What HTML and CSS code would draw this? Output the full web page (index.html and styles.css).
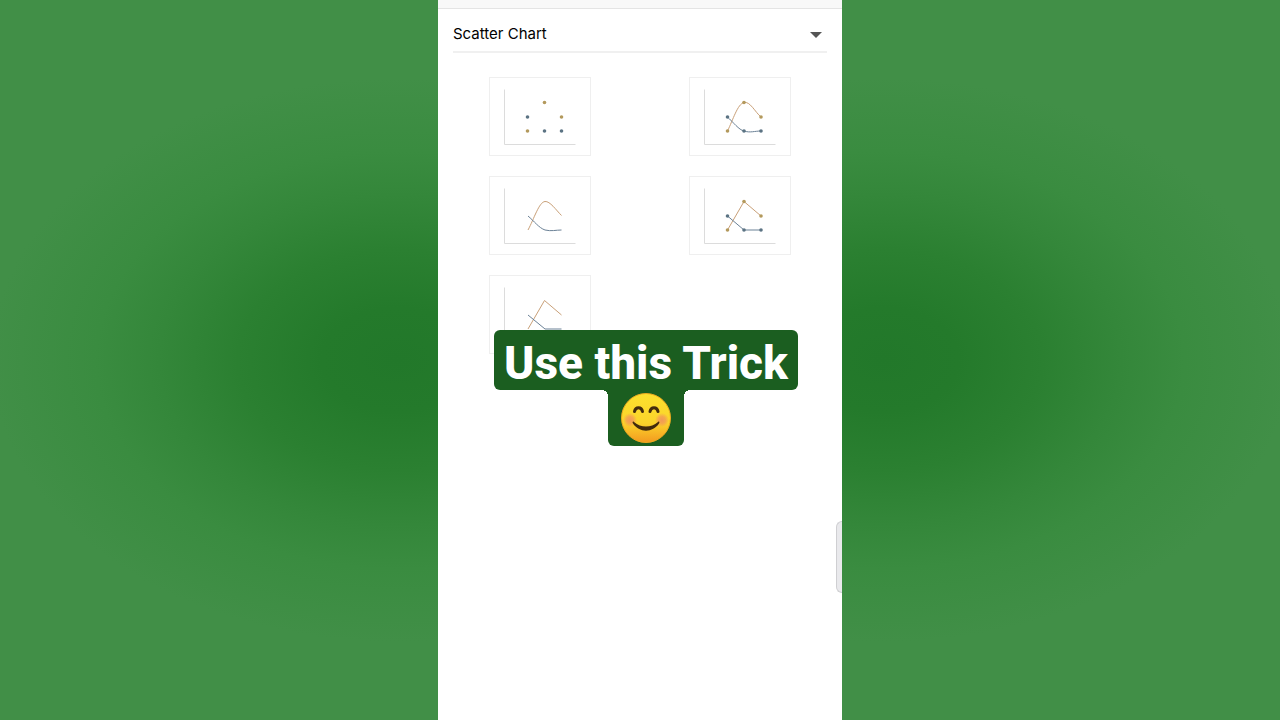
FILE: index.html
```html
<!DOCTYPE html>
<html lang="en">
<head>
    <meta charset="utf-8">
    <meta name="viewport" content="width=device-width, initial-scale=1">
    <title>Scatter Chart</title>
    <link rel="stylesheet" href="styles.css">
</head>
<body>

    <main class="phone">
        <div class="top-bar"></div>

        <div class="chart-select">
            <select id="chartType" aria-label="Chart type">
                <option>Scatter Chart</option>
            </select>
            <svg class="caret" viewBox="0 0 12 6" aria-hidden="true"><path d="M0 0h12L6 6z"/></svg>
        </div>

        <div class="chart-grid">
            <!-- markers only -->
            <button class="chart-tile" type="button" aria-label="Scatter">
                <svg viewBox="1 1 100 77">
                    <path class="axis" d="M15.5 12.5v55h71"/>
                    <g class="dot-a"><circle cx="38.5" cy="54" r="1.8"/><circle cx="55.5" cy="25.5" r="1.8"/><circle cx="72.5" cy="40" r="1.8"/></g>
                    <g class="dot-b"><circle cx="38.5" cy="40" r="1.8"/><circle cx="55.5" cy="54" r="1.8"/><circle cx="72.5" cy="54" r="1.8"/></g>
                </svg>
            </button>
            <!-- smooth lines and markers -->
            <button class="chart-tile" type="button" aria-label="Scatter with smooth lines and markers">
                <svg viewBox="1 1 100 77">
                    <path class="axis" d="M15.5 12.5v55h71"/>
                    <path class="line-a" d="M38.5 54C44 43 48.5 27 55 25.5C61 24 66 35 72 40"/>
                    <path class="line-b" d="M38.5 40C44 45 50 53 55 54C61 56 66 54 72 54"/>
                    <g class="dot-a"><circle cx="38.5" cy="54" r="1.8"/><circle cx="55" cy="25.5" r="1.8"/><circle cx="72" cy="40" r="1.8"/></g>
                    <g class="dot-b"><circle cx="38.5" cy="40" r="1.8"/><circle cx="55" cy="54" r="1.8"/><circle cx="72" cy="54" r="1.8"/></g>
                </svg>
            </button>
            <!-- smooth lines -->
            <button class="chart-tile" type="button" aria-label="Scatter with smooth lines">
                <svg viewBox="1 1 100 77">
                    <path class="axis" d="M15.5 12.5v55h71"/>
                    <path class="line-a" d="M39 54C45 43 50 26 56 25.5C61 25 67 34 72.5 39.5"/>
                    <path class="line-b" d="M39 40C45 45 50 52 56 54C62 55.5 67 54 72.5 54"/>
                </svg>
            </button>
            <!-- straight lines and markers -->
            <button class="chart-tile" type="button" aria-label="Scatter with straight lines and markers">
                <svg viewBox="1 1 100 77">
                    <path class="axis" d="M15.5 12.5v55h71"/>
                    <path class="line-a" d="M38.5 54L55 25.5L72 40"/>
                    <path class="line-b" d="M38.5 40L55 54H72"/>
                    <g class="dot-a"><circle cx="38.5" cy="54" r="1.8"/><circle cx="55" cy="25.5" r="1.8"/><circle cx="72" cy="40" r="1.8"/></g>
                    <g class="dot-b"><circle cx="38.5" cy="40" r="1.8"/><circle cx="55" cy="54" r="1.8"/><circle cx="72" cy="54" r="1.8"/></g>
                </svg>
            </button>
            <!-- straight lines -->
            <button class="chart-tile" type="button" aria-label="Scatter with straight lines">
                <svg viewBox="1 1 100 77">
                    <path class="axis" d="M15.5 12.5v55h71"/>
                    <path class="line-a" d="M39 54L55.5 25.5L72.5 40"/>
                    <path class="line-b" d="M39 40L56 54H72.5"/>
                </svg>
            </button>
        </div>

        <div class="caption">
            <div class="caption-text">Use this Trick</div>
            <div class="caption-emoji">
                <svg viewBox="0 0 52 52" role="img" aria-label="Smiling face">
                    <defs>
                        <linearGradient id="face" x1="0" y1="0" x2="0" y2="1">
                            <stop offset="0" stop-color="#fce02e"/>
                            <stop offset="0.6" stop-color="#fbd42b"/>
                            <stop offset="1" stop-color="#f39a20"/>
                        </linearGradient>
                        <radialGradient id="blush">
                            <stop offset="0" stop-color="#f08a62" stop-opacity="0.8"/>
                            <stop offset="0.5" stop-color="#f08a62" stop-opacity="0.6"/>
                            <stop offset="1" stop-color="#f08a62" stop-opacity="0"/>
                        </radialGradient>
                    </defs>
                    <circle cx="26" cy="26" r="24.5" fill="url(#face)" stroke="#eda81f"/>
                    <circle cx="10" cy="28" r="7" fill="url(#blush)"/>
                    <circle cx="42" cy="28" r="7" fill="url(#blush)"/>
                    <path class="eye" d="M14.5 19.5C15.5 14.5 21.5 14.5 22.5 19.5"/>
                    <path class="eye" d="M30 19.5C31 14.5 37 14.5 38 19.5"/>
                    <path class="mouth" d="M14 30C21 36 31 36 38 30C39 29 40 30 39 31.5C33 41 19 41 13 31.5C12 30 13 29 14 30Z"/>
                </svg>
            </div>
        </div>

        <div class="edge-handle"></div>
    </main>

</body>
</html>
```
FILE: styles.css
```css
* {
    box-sizing: border-box;
}
body {
    margin: 0;
    min-height: 100vh;
    /* one glow behind each side of the phone */
    background:
        radial-gradient(ellipse 47% 29% at 62% 50%, #22782a, #247a2b 25%, #2b8031 53%, #34873a 79%, #3a8c40 100%, #418f47 135%) left / 50% 100% no-repeat,
        radial-gradient(ellipse 47% 29% at 38% 50%, #22782a, #247a2b 25%, #2b8031 53%, #34873a 79%, #3a8c40 100%, #418f47 135%) right / 50% 100% no-repeat;
    font-family: Inter, "Liberation Sans", sans-serif;
}
.phone {
    position: relative;
    max-width: 404px;
    min-height: 100vh;
    margin: 0 auto;
    background: #fff;
    overflow: hidden;
}
.top-bar {
    height: 9px;
    background: #f8f8f8;
    border-bottom: 1px solid #e4e4e4;
}

/* chart type drop-down */
.chart-select {
    position: relative;
    margin: 6px 15px 0;
    border-bottom: 2px solid #f0f0f0;
}
.chart-select select {
    display: block;
    width: 100%;
    height: 36px;
    padding: 2px 0 0;
    border: 0;
    background: none;
    appearance: none;
    color: #000;
    font: 15px/20px Inter, "Liberation Sans", sans-serif;
}
.caret {
    position: absolute;
    top: 17px;
    right: 5px;
    width: 12px;
    height: 6px;
    fill: #555;
    pointer-events: none;
}

/* previews */
.chart-grid {
    display: grid;
    grid-template-columns: 1fr 1fr;
    justify-items: center;
    row-gap: 20px;
    padding: 24px 2px;
}
.chart-tile {
    width: 102px;
    height: 79px;
    padding: 0;
    border: 1px solid #efefef;
    background: #fff;
}
.chart-tile svg {
    display: block;
    width: 100%;
    height: 100%;
    fill: none;
}
.axis {
    stroke: #dcdcdc;
}
.line-a {
    stroke: #c9a078;
}
.line-b {
    stroke: #6b8196;
}
.dot-a {
    fill: #b3995c;
}
.dot-b {
    fill: #5b7383;
}

/* caption over the page */
.caption {
    position: absolute;
    top: 330px;
    left: 56px;
    display: flex;
    flex-direction: column;
    align-items: center;
}
.caption-text {
    padding: 6px 10px 0;
    border-radius: 6px;
    background: #1b5e20;
    color: #fff;
    font: 800 46px/54px Roboto, "Liberation Sans", sans-serif;
    white-space: nowrap;
}
.caption-emoji {
    position: relative;
    padding: 2px 12px;
    border-radius: 0 0 6px 6px;
    background: #1b5e20;
}
.caption-emoji svg {
    display: block;
    width: 52px;
    height: 52px;
}
.caption-emoji::before, .caption-emoji::after {
    content: "";
    position: absolute;
    top: 0;
    width: 6px;
    height: 6px;
}
.caption-emoji::before {
    right: 100%;
    background: radial-gradient(circle at 0 100%, transparent 6px, #1b5e20 6px);
}
.caption-emoji::after {
    left: 100%;
    background: radial-gradient(circle at 100% 100%, transparent 6px, #1b5e20 6px);
}
.eye {
    fill: none;
    stroke: #422b0d;
    stroke-width: 3;
    stroke-linecap: round;
}
.mouth {
    fill: #422b0d;
}

.edge-handle {
    position: absolute;
    top: 521px;
    right: 0;
    width: 6px;
    height: 72px;
    border: 1px solid #cfcfd2;
    border-right: 0;
    border-radius: 6px 0 0 6px;
    background: #e9e9ec;
}
```
